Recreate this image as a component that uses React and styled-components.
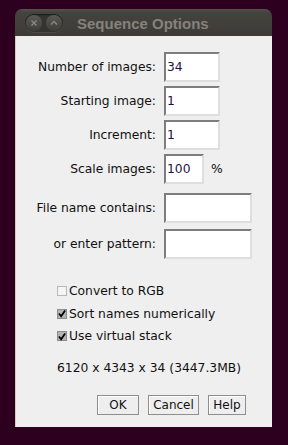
import React from 'react';
import styled, { createGlobalStyle } from 'styled-components';

const Global = createGlobalStyle`
  body {
    margin: 0;
    background: #2c001e;
    font-family: "DejaVu Sans", "Liberation Sans", sans-serif;
  }
`;

const Win = styled.div`
  margin: 9px 0 0 15px;
  width: 257px;
`;

const TitleBar = styled.div`
  height: 27px;
  border-radius: 7px 7px 0 0;
  background: linear-gradient(#55524c 0, #45433e 3px, #3c3b37 100%);
  display: flex;
  align-items: center;
  padding-left: 10px;
  gap: 14px;
`;

const Controls = styled.div`
  width: 38px;
  height: 18px;
  border-radius: 9px;
  background: #34332f;
  box-shadow: inset 0 1px 1px rgba(0, 0, 0, 0.5), 0 1px 0 rgba(255, 255, 255, 0.08);
  display: flex;
  align-items: center;
  justify-content: space-between;
  padding: 0 1px;
  box-sizing: border-box;
`;

const Knob = styled.div`
  width: 16px;
  height: 16px;
  border-radius: 50%;
  background: linear-gradient(#5b5954, #3e3d39);
  display: flex;
  align-items: center;
  justify-content: center;
`;

const Title = styled.div`
  font-family: "Liberation Sans", sans-serif;
  font-weight: bold;
  font-size: 15px;
  color: #85827c;
  margin-top: 1px;
`;

const Body = styled.div`
  height: 391px;
  box-sizing: border-box;
  background: #efefef;
  border-left: 1px solid #d6ccbb;
  box-shadow: 0 1px 0 #e0d8ca, 0 2px 0 #bdb3a2, 0 3px 0 #7b6a68, 0 4px 0 #45283a;
  padding-top: 16px;
  font-size: 12.3px;
  color: #111;
`;

const Row = styled.div`
  display: flex;
  align-items: center;
  margin-top: ${(p) => p.$gap || 0}px;
`;

const Label = styled.div`
  width: 140px;
  text-align: right;
  margin-right: 8px;
  white-space: nowrap;
`;

const Field = styled.div`
  width: ${(p) => p.$w}px;
  height: 30px;
  box-sizing: border-box;
  background: #fff;
  border: 2px solid;
  border-color: #7d7d7d #dedede #dedede #7d7d7d;
  display: flex;
  align-items: center;
  padding-left: 1px;
  color: #1c1245;
`;

const Unit = styled.span`
  margin-left: 7px;
`;

const Checks = styled.div`
  margin: 21px 0 0 41px;
  display: flex;
  flex-direction: column;
`;

const CheckRow = styled.div`
  height: 22.5px;
  display: flex;
  align-items: center;
  gap: 2px;
`;

const Box = styled.span`
  width: 10px;
  height: 10px;
  box-sizing: border-box;
  border: 1px solid ${(p) => (p.$on ? '#8c8c8c' : '#b8b8b8')};
  background: ${(p) => (p.$on ? '#b4b4b4' : '#f4f4f4')};
  display: inline-flex;
  align-items: center;
  justify-content: center;
`;

const Info = styled.div`
  margin: 13px 0 0 41px;
`;

const Buttons = styled.div`
  display: flex;
  gap: 9px;
  margin: 20px 0 0 81px;
`;

const Btn = styled.button`
  height: 20px;
  min-width: ${(p) => p.$w}px;
  padding: 0 4px;
  font-family: "DejaVu Sans", sans-serif;
  font-size: 12px;
  color: #111;
  background: #eeeeee;
  border: 1px solid #8e8e8e;
  box-shadow: inset 1px 1px 0 #fff;
`;

const Check = ({ on, children }) => (
  <CheckRow>
    <Box $on={on}>
      {on && (
        <svg width="9" height="9" viewBox="0 0 9 9">
          <path d="M1 4.5 L3.5 7.5 L8 1" stroke="#000" strokeWidth="2" fill="none" />
        </svg>
      )}
    </Box>
    {children}
  </CheckRow>
);

export default function App() {
  return (
    <>
      <Global />
      <Win>
        <TitleBar>
          <Controls>
            <Knob>
              <svg width="8" height="8" viewBox="0 0 8 8">
                <path d="M1.5 1.5 L6.5 6.5 M6.5 1.5 L1.5 6.5" stroke="#8d8a84" strokeWidth="1.3" />
              </svg>
            </Knob>
            <Knob>
              <svg width="8" height="8" viewBox="0 0 8 8">
                <path d="M1 5.5 L4 2.5 L7 5.5" stroke="#8d8a84" strokeWidth="1.3" fill="none" />
              </svg>
            </Knob>
          </Controls>
          <Title>Sequence Options</Title>
        </TitleBar>
        <Body>
          <Row>
            <Label>Number of images:</Label>
            <Field $w={56}>34</Field>
          </Row>
          <Row $gap={4}>
            <Label>Starting image:</Label>
            <Field $w={56}>1</Field>
          </Row>
          <Row $gap={4}>
            <Label>Increment:</Label>
            <Field $w={56}>1</Field>
          </Row>
          <Row $gap={4}>
            <Label>Scale images:</Label>
            <Field $w={40}>100</Field>
            <Unit>%</Unit>
          </Row>
          <Row $gap={9}>
            <Label>File name contains:</Label>
            <Field $w={88} />
          </Row>
          <Row $gap={6}>
            <Label>or enter pattern:</Label>
            <Field $w={88} />
          </Row>
          <Checks>
            <Check>Convert to RGB</Check>
            <Check on>Sort names numerically</Check>
            <Check on>Use virtual stack</Check>
          </Checks>
          <Info>6120 x 4343 x 34 (3447.3MB)</Info>
          <Buttons>
            <Btn $w={42}>OK</Btn>
            <Btn $w={51}>Cancel</Btn>
            <Btn $w={38}>Help</Btn>
          </Buttons>
        </Body>
      </Win>
    </>
  );
}
